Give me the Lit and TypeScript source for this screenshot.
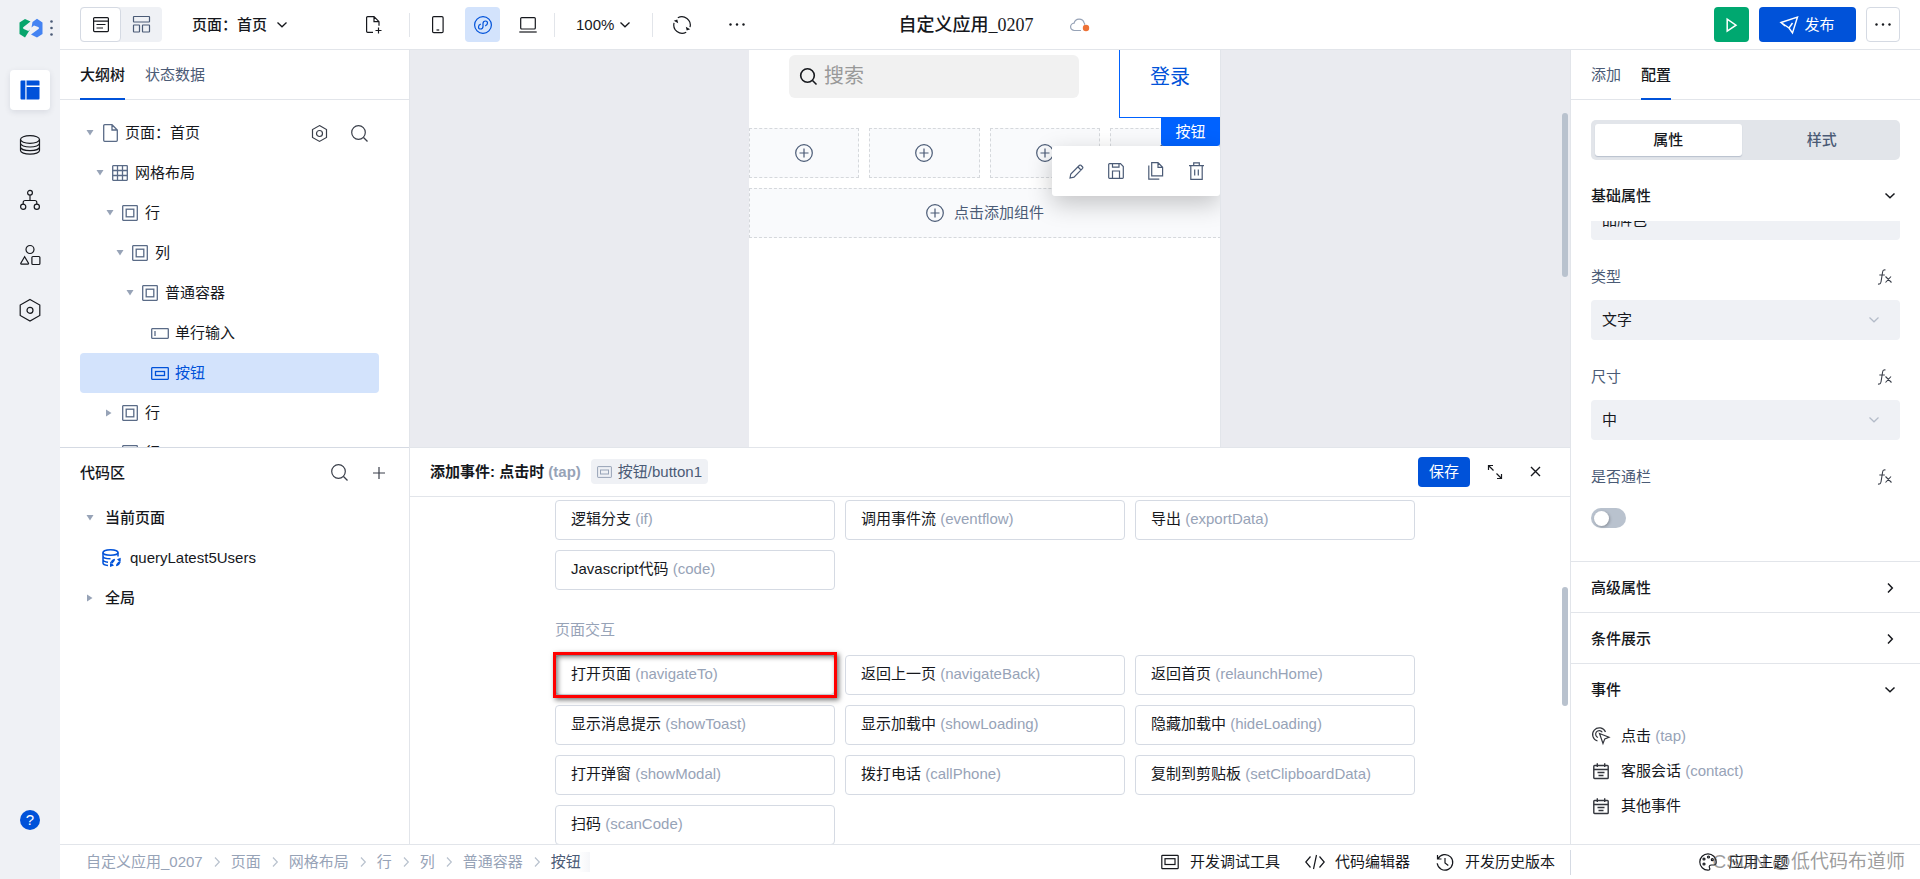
import { LitElement, html, svg, css, nothing } from "lit";
import type { TemplateResult } from "lit";
import { customElement, property } from "lit/decorators.js";
import { classMap } from "lit/directives/class-map.js";
import { styleMap } from "lit/directives/style-map.js";

/* ---------- icons ---------- */

const shapes: Record<string, TemplateResult> = {
  logo: svg`<path fill="#07a56c" stroke="none" d="M0.5 4.500 6 1l5.500 2.500-7 5.500q-1.500 1.200.3 2l4.500 2 1.700-1.500-5 8L.5 16z"/><path fill="#4483f2" stroke="none" d="M13.500 4 18 .8 23.500 4.500V16L18 19.500l-6-3 7.500-5.500q1.500-1-.3-2L15 7.500 12.500 9.500z"/>`,
  layout: svg`<path fill="currentColor" stroke="none" d="M1.500.5h3.500v19H1.500a1 1 0 0 1-1-1v-17a1 1 0 0 1 1-1zM6.500.5h12a1 1 0 0 1 1 1V5.500h-13zM6.500 7h13v11.500a1 1 0 0 1-1 1h-12z"/><path d="M5.700.5v19" stroke="#9dbdf2"/>`,
  database: svg`<ellipse cx="10" cy="4.500" rx="9.500" ry="3.800"/><path d="M.5 4.500v11c0 2.100 4.200 3.700 9.500 3.700s9.500-1.600 9.500-3.700v-11M.5 8.300C.5 10.400 4.700 12 10 12s9.500-1.600 9.500-3.700M.5 12c0 2.100 4.200 3.600 9.500 3.600s9.500-1.500 9.500-3.600"/>`,
  flow: svg`<circle cx="10" cy="2.800" r="2.400"/><circle cx="3.200" cy="16.800" r="2.600"/><circle cx="16.800" cy="16.800" r="2.600"/><path d="M10 5.200v5.300M3.200 14.200v-1.700q0-2 2-2h9.600q2 0 2 2v1.700"/>`,
  shapes: svg`<circle cx="10" cy="4.500" r="4"/><path d="M4.600 11.800.8 18.300q-.3.900.6.900h6.500q.9 0 .6-.9z"/><rect x="11.900" y="11.500" width="8" height="8" rx="1"/>`,
  hex: svg`<path d="M10-.5 19.800 5v10.500L10 21 .2 15.500V5z"/><circle cx="10" cy="10.300" r="3"/>`,
  gear: svg`<path d="M8.500.6 15.500 4.500v8L8.500 16.400 1.500 12.500v-8z"/><circle cx="8.500" cy="8.500" r="3"/>`,
  panel: svg`<rect x=".6" y=".6" width="14.800" height="14" rx="1"/><path d="M.6 4.200h14.800M3.500 7.500h9M3.500 11h6.500"/>`,
  blocks: svg`<rect x=".5" y=".5" width="16" height="5.500" rx=".5"/><rect x=".5" y="9" width="6" height="7" rx=".5"/><rect x="9.500" y="9" width="7" height="7" rx=".5"/>`,
  chevronDown: svg`<path d="m1.500 3.500 4.500 4.300 4.500-4.300"/>`,
  chevronRight: svg`<path d="m4 1.500 4.300 4.500L4 10.500"/>`,
  fileAdd: svg`<path d="M7 16.300H1.600a1 1 0 0 1-1-1V1.700a1 1 0 0 1 1-1H8l5 5v4M8 .7v5h5M12.500 11.500v6M9.500 14.500h6"/>`,
  phone: svg`<rect x=".6" y=".6" width="10.500" height="16" rx="1.200"/><path d="M4.500 14h2.700"/>`,
  mini: svg`<circle cx="9" cy="9" r="8.400"/><path d="M6.800 8.200C3.600 9 4 13 6.400 13 8.200 13 9 11.900 9 10.500v-3C9 6.100 9.800 5 11.600 5c2.400 0 2.800 4-.4 4.800"/>`,
  laptop: svg`<rect x="1.700" y=".6" width="14.600" height="11.400" rx="1"/><path d="M.3 15h17.400"/>`,
  refresh: svg`<path d="M4.800 1.800A8.400 8.400 0 0 1 17 11.200M13.200 16.200A8.400 8.400 0 0 1 1 6.800"/><path fill="currentColor" stroke="none" d="M.8 4.700 4.300 3.500l.9 3.800zM17.200 13.300l-3.500 1.200-.9-3.800z"/>`,
  dots: svg`<g fill="currentColor" stroke="none"><circle cx="1.500" cy="1.500" r="1.200"/><circle cx="8" cy="1.500" r="1.200"/><circle cx="14.500" cy="1.500" r="1.200"/></g>`,
  dotsV: svg`<g fill="currentColor" stroke="none"><circle cx="1.500" cy="1.500" r="1.300"/><circle cx="1.500" cy="8" r="1.300"/><circle cx="1.500" cy="14.500" r="1.300"/></g>`,
  cloud: svg`<path d="M11 13.500H4.500a3.700 3.700 0 0 1-.4-7.400 5.200 5.200 0 0 1 10-.3q1 1 .4 2"/><circle cx="16" cy="11" r="3.200" fill="#ed7135" stroke="none"/>`,
  play: svg`<path d="M1.200 1.200v12L10 7.200z"/>`,
  send: svg`<path d="M1 6.500 17.500 1l-5 16-3.500-5zM9 12l3.500-5M1 6.500l4 3.500"/>`,
  page: svg`<path d="M1.700.7H9l5.300 5.300v10.300a1 1 0 0 1-1 1H1.700a1 1 0 0 1-1-1V1.700a1 1 0 0 1 1-1zM9 .7V6h5.300"/>`,
  grid: svg`<rect x=".7" y=".7" width="14.600" height="14.600" rx=".5"/><path d="M5.500.7v14.600M10.500.7v14.600M.7 5.500h14.600M.7 10.500h14.600"/>`,
  box: svg`<rect x=".7" y=".7" width="14.600" height="14.600" rx=".5"/><rect x="4.200" y="4.200" width="7.600" height="7.600"/>`,
  input: svg`<rect x=".7" y=".7" width="16.600" height="9.600" rx=".5"/><path d="M4 3v5"/>`,
  button: svg`<rect x=".7" y=".7" width="16.600" height="11.600" rx=".5"/><rect x="4.500" y="4.500" width="9" height="4"/>`,
  search: svg`<circle cx="7.500" cy="7.500" r="6.800"/><path d="m12.500 12.500 4 4"/>`,
  plus: svg`<path d="M6 0v12M0 6h12"/>`,
  query: svg`<ellipse cx="8.500" cy="3.500" rx="7.500" ry="2.800"/><path d="M1 3.500v10.500c0 1.200 2 2.200 5 2.600M16 3.500v4M1 7c0 1.600 3 2.800 7.500 2.800M1 10.500c0 1.400 2 2.400 5 2.800"/><path fill="currentColor" stroke="none" d="M8.500 14.500q.3-4 4.500-4.700l-.3 2-2 2.400zM18.500 12.500q-.3 4-4.500 4.700l.3-2 2-2.400zM8 12.500v5.500l4-1.500zM18.700 14V8.700l-3.700 1.500z"/>`,
  plusCircle: svg`<circle cx="9" cy="9" r="8.300"/><path d="M9 4.500v9M4.500 9h9"/>`,
  pencil: svg`<path d="m1 14 .8-4L10.500 1.300q.7-.6 1.400 0l1.700 1.700q.6.700 0 1.400L5 13.200zM9 3l3 3"/>`,
  save: svg`<path d="M1.500.7h11l2.800 2.800v11a.8.8 0 0 1-.8.800h-13a.8.8 0 0 1-.8-.8v-13a.8.8 0 0 1 .8-.8zM4.500.7v3.500h6.500V.7M4.500 15.300V8h7v7.300"/>`,
  copy: svg`<path d="M3.700.7H10l4.600 4.600v8.600H3.700zM10 .7v4.600h4.600M.8 3.500v13.700h10.500"/>`,
  trash: svg`<path d="M0 3.700h15M1.800 3.700v13.600h11.400V3.700M4.700 3.700V.8h5.600v2.900M5.700 7.500v6M9.300 7.500v6"/>`,
  expand: svg`<path d="M1.500 6V1.500H6M1.500 1.500l5 5M14.500 10v4.500H10M14.500 14.500l-5-5"/>`,
  close: svg`<path d="m1 1 9 9M10 1l-9 9"/>`,
  tap: svg`<path d="M5.500 14a6.700 6.700 0 1 1 8-9M6 10.500a3.600 3.600 0 1 1 4.300-5.300M7.500 6.500 17 10.200l-4.200 1.700L11 16.500z"/>`,
  calendar: svg`<rect x=".8" y="2.500" width="14.400" height="13" rx=".8"/><path d="M.8 6.500h14.400M4.300.3V4M11.700.3V4M4.500 9.500h7M5.500 12.500h5"/>`,
  screen: svg`<rect x=".8" y="1.300" width="16.400" height="13.400" rx=".8"/><rect x="4" y="4.700" width="10" height="5.800"/>`,
  code: svg`<path d="M5.500 2.500.8 8l4.700 5.500M14.500 2.500 19.200 8l-4.700 5.500M11.500 1 8.500 15"/>`,
  history: svg`<path d="M1.500 2v4h4M2 5.800a7.800 7.800 0 1 1-.8 4.500M9 5v5l3.300 2.500"/>`,
  palette: svg`<path d="M9 .8a8.200 8.200 0 1 0 0 16.400c1.800 0 2.300-1 1.500-2.500-.8-1.600.2-2.700 2-2.700h2.500c1.500 0 2.200-1 2.200-3A8.200 8.200 0 0 0 9 .8z"/><circle cx="5" cy="6" r="1"/><circle cx="9.500" cy="4" r="1"/><circle cx="13.300" cy="6.700" r="1"/><circle cx="5" cy="11" r="1"/>`,
  fx: svg`<path d="M7.500 1q-2.400-.7-2.900 2L3 13q-.5 2.500-3 2M1.300 6h5.500M7.500 7.500l6 6M13 7.500l-5.500 6"/>`,
  arrowDown: svg`<path fill="currentColor" stroke="none" d="M.5 0h7L4 5.500z"/>`,
  arrowRight: svg`<path fill="currentColor" stroke="none" d="M0 .5v7L5.500 4z"/>`,
};

const icon = (name: string, w: number, h: number = w, stroke = 1.2) =>
  html`<svg
    width=${w}
    height=${h}
    viewBox="0 0 ${w} ${h}"
    fill="none"
    stroke="currentColor"
    stroke-width=${stroke}
    overflow="visible"
    aria-hidden="true"
  >${shapes[name]}</svg>`;

/* ---------- shared styles ---------- */

const base = css`
  * {
    box-sizing: border-box;
  }
  :host {
    font-family: "Liberation Sans", "Noto Sans CJK SC", sans-serif;
    font-size: 15px;
    line-height: 20px;
    color: #16181d;
  }
  button,
  input,
  select {
    font: inherit;
    color: inherit;
    margin: 0;
    padding: 0;
    border: 0;
    background: none;
    outline: none;
    appearance: none;
  }
  button {
    display: inline-flex;
    align-items: center;
    justify-content: center;
    white-space: nowrap;
  }
  a {
    color: inherit;
    text-decoration: none;
  }
  h2,
  h3 {
    margin: 0;
    font: inherit;
  }
  svg {
    display: block;
    flex: none;
  }
  .tabs {
    display: flex;
    gap: 20px;
    height: 50px;
    padding: 0 20px;
    border-bottom: 1px solid #e2e5ea;
    flex: none;
  }
  .tab {
    height: 50px;
    padding-bottom: 1px;
    color: #4b5b76;
    border-top: 2px solid transparent;
    border-bottom: 2px solid transparent;
  }
  .tab.on {
    color: #16181d;
    font-weight: 500;
    border-bottom-color: #0052d9;
  }
  .dim {
    color: #97a3b7;
  }
`;

/* ---------- side rail ---------- */

@customElement("side-rail")
class SideRail extends LitElement {
  static styles = [
    base,
    css`
      :host {
        display: flex;
        flex-direction: column;
        align-items: center;
        width: 60px;
        flex: none;
        background: #eff1f5;
        padding-bottom: 49px;
      }
      .brand {
        display: flex;
        align-items: center;
        gap: 7px;
        height: 55px;
        padding-left: 11px;
        color: #4b5b76;
      }
      nav {
        display: flex;
        flex-direction: column;
        gap: 15px;
        padding-top: 15px;
        flex: 1;
      }
      .item {
        width: 40px;
        height: 40px;
        border-radius: 4px;
      }
      .item.on {
        background: #fff;
        color: #0052d9;
        box-shadow: 0 2px 6px rgba(20, 30, 60, 0.1);
      }
      .help {
        width: 20px;
        height: 20px;
        border-radius: 50%;
        background: #0052d9;
        color: #fff;
      }
    `,
  ];
  render() {
    const items = ["layout", "database", "flow", "shapes", "hex"];
    return html`
      <div class="brand">${icon("logo", 24, 20)}${icon("dotsV", 3, 16)}</div>
      <nav>
        ${items.map(
          (n, i) => html`<button class=${classMap({ item: true, on: i === 0 })} aria-label=${n}>${icon(n, 20)}</button>`
        )}
      </nav>
      <button class="help">?</button>
    `;
  }
}

/* ---------- top bar ---------- */

@customElement("top-bar")
class TopBar extends LitElement {
  static styles = [
    base,
    css`
      :host {
        display: flex;
        align-items: center;
        height: 50px;
        flex: none;
        padding: 0 20px;
        border-bottom: 1px solid #e2e5ea;
        background: #fff;
      }
      .group {
        display: flex;
        align-items: center;
        flex: 1 1 0;
      }
      .right {
        justify-content: flex-end;
        gap: 10px;
      }
      .views {
        display: flex;
        background: #eff1f5;
        border-radius: 4px;
      }
      .view {
        width: 41px;
        height: 35px;
        color: #4b5b76;
      }
      .view.on {
        background: #fff;
        border: 1px solid #d5dae3;
        border-radius: 4px;
        color: #16181d;
      }
      .page {
        gap: 9px;
        margin-left: 30px;
        margin-right: 68px;
        font-weight: 500;
      }
      .tool {
        width: 35px;
        height: 35px;
        border-radius: 4px;
      }
      .tool.on {
        background: #d3e3fc;
        color: #0052d9;
      }
      .sep {
        width: 1px;
        height: 24px;
        background: #e2e5ea;
      }
      .devices {
        display: flex;
        gap: 10px;
        padding: 0 9px 0 10px;
      }
      .zoom {
        gap: 5px;
        padding: 0 21px;
      }
      .sep + .tool {
        margin-left: 11px;
      }
      .first {
        margin-right: 18px;
      }
      .more {
        margin-left: 20px;
      }
      .title {
        display: flex;
        align-items: center;
        gap: 36px;
        padding-left: 8px;
        font-family: "Liberation Serif", "Noto Sans CJK SC", serif;
        font-size: 18px;
        font-weight: 500;
      }
      .title svg {
        color: #97a3b7;
      }
      .play,
      .publish,
      .menu {
        height: 35px;
        border-radius: 4px;
      }
      .play {
        width: 35px;
        background: #00a870;
        color: #fff;
      }
      .publish {
        width: 97px;
        gap: 6px;
        background: #0052d9;
        color: #fff;
      }
      .menu {
        width: 34px;
        border: 1px solid #d5dae3;
      }
    `,
  ];
  render() {
    return html`
      <div class="group">
        <div class="views">
          <button class="view on" aria-label="页面视图">${icon("panel", 16, 15)}</button>
          <button class="view" aria-label="布局视图">${icon("blocks", 17)}</button>
        </div>
        <button class="page">页面：首页 ${icon("chevronDown", 12, 12, 1.3)}</button>
        <button class="tool first" aria-label="新建页面">${icon("fileAdd", 16, 17)}</button>
        <span class="sep"></span>
        <div class="devices">
          <button class="tool" aria-label="手机">${icon("phone", 12, 17)}</button>
          <button class="tool on" aria-label="小程序">${icon("mini", 18)}</button>
          <button class="tool" aria-label="电脑">${icon("laptop", 18, 16)}</button>
        </div>
        <span class="sep"></span>
        <button class="zoom">100% ${icon("chevronDown", 12, 12, 1.3)}</button>
        <span class="sep"></span>
        <button class="tool" aria-label="刷新">${icon("refresh", 18)}</button>
        <button class="tool more" aria-label="更多">${icon("dots", 16, 3)}</button>
      </div>
      <div class="title"><span>自定义应用_0207</span>${icon("cloud", 20, 16)}</div>
      <div class="group right">
        <button class="play" aria-label="预览">${icon("play", 11, 14, 1.5)}</button>
        <button class="publish">${icon("send", 18, 18, 1.4)}<span>发布</span></button>
        <button class="menu" aria-label="菜单">${icon("dots", 16, 3)}</button>
      </div>
    `;
  }
}

/* ---------- outline and code ---------- */

interface Node {
  level: number;
  icon: string;
  text: string;
  arrow?: "down" | "right";
  on?: boolean;
}

const iconSize: Record<string, [number, number]> = {
  page: [15, 18],
  grid: [16, 16],
  box: [16, 16],
  input: [18, 11],
  button: [18, 13],
};

@customElement("outline-panel")
class OutlinePanel extends LitElement {
  private nodes: Node[] = [
    { level: 0, icon: "page", text: "页面：首页", arrow: "down" },
    { level: 1, icon: "grid", text: "网格布局", arrow: "down" },
    { level: 2, icon: "box", text: "行", arrow: "down" },
    { level: 3, icon: "box", text: "列", arrow: "down" },
    { level: 4, icon: "box", text: "普通容器", arrow: "down" },
    { level: 5, icon: "input", text: "单行输入" },
    { level: 5, icon: "button", text: "按钮", on: true },
    { level: 2, icon: "box", text: "行", arrow: "right" },
    { level: 2, icon: "box", text: "行" },
  ];
  static styles = [
    base,
    css`
      :host {
        display: flex;
        flex-direction: column;
        width: 350px;
        flex: none;
        border-right: 1px solid #e2e5ea;
        background: #fff;
      }
      section {
        flex: 1 1 0;
        min-height: 0;
        overflow: hidden;
        display: flex;
        flex-direction: column;
      }
      .tree {
        flex: 1;
        min-height: 0;
        padding: 13px 30px 0 20px;
        overflow: hidden;
      }
      .node {
        display: flex;
        align-items: center;
        gap: 6px;
        height: 40px;
        padding-left: 5px;
        border-radius: 4px;
      }
      .node.on {
        background: #d3e3fc;
        color: #0052d9;
      }
      .arrow,
      .glyph {
        display: flex;
        justify-content: center;
        flex: none;
        color: #97a3b7;
      }
      .arrow {
        width: 10px;
      }
      .glyph {
        width: 18px;
        color: #5a6b87;
      }
      .node.on .glyph {
        color: inherit;
      }
      .tools {
        display: flex;
        margin-left: auto;
      }
      .tools button {
        width: 40px;
        height: 40px;
        color: #3a3f4a;
      }
      .code {
        border-top: 1px solid #d5dae3;
      }
      .files {
        padding: 5px 10px 0 20px;
      }
      .head {
        display: flex;
        align-items: center;
        height: 40px;
        margin-bottom: 5px;
        font-weight: 500;
      }
      .group {
        gap: 10px;
        font-weight: 500;
      }
      .item {
        gap: 10px;
        padding-left: 22px;
      }
      .item svg {
        color: #0052d9;
      }
    `,
  ];
  render() {
    return html`
      <section>
        <div class="tabs">
          <button class="tab on">大纲树</button>
          <button class="tab">状态数据</button>
        </div>
        <div class="tree">
          ${this.nodes.map(
            (n) => html`<div
              class=${classMap({ node: true, on: !!n.on })}
              style=${styleMap({ paddingLeft: `${5 + n.level * 10}px` })}
            >
              <span class="arrow"
                >${n.arrow === "down"
                  ? icon("arrowDown", 8, 6)
                  : n.arrow === "right"
                    ? icon("arrowRight", 8, 8)
                    : nothing}</span
              >
              <span class="glyph">${icon(n.icon, ...iconSize[n.icon], 1.3)}</span>
              <span>${n.text}</span>
              ${n.level === 0
                ? html`<span class="tools">
                    <button aria-label="设置">${icon("gear", 17)}</button>
                    <button aria-label="搜索">${icon("search", 17)}</button>
                  </span>`
                : nothing}
            </div>`
          )}
        </div>
      </section>
      <section class="code">
        <div class="files">
          <div class="head">
            <h2>代码区</h2>
            <span class="tools">
              <button aria-label="搜索代码">${icon("search", 17)}</button>
              <button aria-label="新建代码">${icon("plus", 12)}</button>
            </span>
          </div>
          <div class="node group"><span class="arrow">${icon("arrowDown", 8, 6)}</span>当前页面</div>
          <div class="node item">${icon("query", 18, 18, 1.5)}queryLatest5Users</div>
          <div class="node group"><span class="arrow">${icon("arrowRight", 6, 8)}</span>全局</div>
        </div>
      </section>
    `;
  }
}

/* ---------- canvas ---------- */

@customElement("design-canvas")
class DesignCanvas extends LitElement {
  static styles = [
    base,
    css`
      :host {
        display: flex;
        flex: 1 1 0;
        min-height: 0;
        overflow: hidden;
        background: #eaebf0;
      }
      .stage {
        flex: 1;
        display: flex;
        justify-content: center;
      }
      .phone {
        width: 472px;
        background: #fff;
        overflow: hidden;
        display: flex;
        flex-direction: column;
        gap: 10px;
        border-right: 1px solid #e2e5ea;
      }
      .top {
        display: flex;
        gap: 40px;
        padding-left: 40px;
        height: 68px;
        flex: none;
      }
      .search {
        flex: 1;
        min-width: 0;
        display: flex;
        align-items: center;
        gap: 7px;
        height: 43px;
        margin-top: 5px;
        padding: 0 11px;
        border-radius: 6px;
        background: #f1f1f1;
      }
      .search input {
        flex: 1;
        min-width: 0;
        height: 30px;
        font-size: 20px;
      }
      .search input::placeholder {
        color: #999;
      }
      .picked {
        position: relative;
        width: 101px;
        border: solid #0062ff;
        border-width: 0 0 1px 1px;
      }
      .login {
        width: 100%;
        height: 54px;
        font-size: 20px;
        color: #0052d9;
      }
      .overlay {
        position: absolute;
        z-index: 1;
        top: 100%;
        right: 0;
        display: flex;
        flex-direction: column;
        align-items: flex-end;
      }
      .tag {
        width: 59px;
        height: 29px;
        line-height: 29px;
        text-align: center;
        background: #0062ff;
        color: #fff;
        border-radius: 0 0 3px 3px;
      }
      .bar {
        display: flex;
        height: 50px;
        padding: 0 4px;
        background: #fff;
        border-radius: 3px;
        color: #4b5b76;
        box-shadow: 0 8px 24px rgba(0, 0, 0, 0.22);
      }
      .bar button {
        width: 40px;
      }
      .cells {
        display: grid;
        grid-template-columns: repeat(4, 1fr);
        gap: 10px;
      }
      .slot {
        height: 50px;
        gap: 10px;
        border: 1px dashed #d5d8dc;
        background: #f9fafc;
        color: #4b5b76;
      }
      .slot.wide {
        margin-right: -1px;
      }
      .track {
        width: 10px;
        padding-top: 63px;
      }
      .thumb {
        width: 6px;
        height: 164px;
        margin-left: 2px;
        border-radius: 3px;
        background: #b9c2ce;
      }
    `,
  ];
  render() {
    return html`
      <div class="stage">
        <div class="phone">
          <div class="top">
            <label class="search">${icon("search", 17, 17, 1.6)}<input placeholder="搜索" aria-label="搜索" /></label>
            <div class="picked">
              <button class="login">登录</button>
              <div class="overlay">
                <span class="tag">按钮</span>
                <div class="bar">
                  <button aria-label="编辑">${icon("pencil", 15)}</button>
                  <button aria-label="保存">${icon("save", 16)}</button>
                  <button aria-label="复制">${icon("copy", 16, 18)}</button>
                  <button aria-label="删除">${icon("trash", 15, 18)}</button>
                </div>
              </div>
            </div>
          </div>
          <div class="cells">
            ${[1, 2, 3, 4].map(
              (i) => html`<button class="slot" aria-label="添加组件 ${i}">${icon("plusCircle", 18)}</button>`
            )}
          </div>
          <button class="slot wide">${icon("plusCircle", 18)}<span>点击添加组件</span></button>
        </div>
      </div>
      <div class="track"><div class="thumb"></div></div>
    `;
  }
}

/* ---------- event panel ---------- */

type Action = [string, string];

@customElement("event-panel")
class EventPanel extends LitElement {
  private logic: Action[] = [
    ["逻辑分支", "if"],
    ["调用事件流", "eventflow"],
    ["导出", "exportData"],
    ["Javascript代码", "code"],
  ];
  private pages: Action[] = [
    ["打开页面", "navigateTo"],
    ["返回上一页", "navigateBack"],
    ["返回首页", "relaunchHome"],
    ["显示消息提示", "showToast"],
    ["显示加载中", "showLoading"],
    ["隐藏加载中", "hideLoading"],
    ["打开弹窗", "showModal"],
    ["拨打电话", "callPhone"],
    ["复制到剪贴板", "setClipboardData"],
    ["扫码", "scanCode"],
  ];
  static styles = [
    base,
    css`
      :host {
        display: flex;
        flex-direction: column;
        flex: 1 1 0;
        min-height: 0;
        border-top: 1px solid #e2e5ea;
        background: #fff;
      }
      header {
        display: flex;
        align-items: center;
        height: 49px;
        flex: none;
        padding: 0 15px 0 20px;
        border-bottom: 1px solid #e2e5ea;
      }
      h2 {
        font-weight: bold;
      }
      .ref {
        display: flex;
        align-items: center;
        gap: 6px;
        height: 25px;
        margin: 0 auto 0 10px;
        padding: 0 6px;
        border-radius: 4px;
        background: #eff1f5;
        color: #4b5b76;
      }
      .ref svg {
        color: #97a3b7;
      }
      .save {
        width: 52px;
        height: 30px;
        margin-right: 5px;
        border-radius: 4px;
        background: #0052d9;
        color: #fff;
      }
      .act {
        width: 40px;
        height: 40px;
      }
      .scroll {
        flex: 1;
        min-height: 0;
        display: flex;
        overflow: hidden;
      }
      .content {
        flex: 1;
        padding: 3px 20px 0;
      }
      .list {
        width: 100%;
        max-width: 860px;
        margin: 0 auto;
      }
      .grid {
        display: grid;
        grid-template-columns: repeat(3, 1fr);
        gap: 10px;
      }
      h3 {
        margin: 30px 0 15px;
        color: #97a3b7;
      }
      .card {
        position: relative;
        height: 40px;
        justify-content: flex-start;
        padding: 0 15px 2px;
        border: 1px solid #d5dae3;
        border-radius: 4px;
      }
      .card .dim {
        white-space: pre;
      }
      .mark::after {
        content: "";
        position: absolute;
        inset: -4px -3px -4px -3px;
        border: 3px solid #f00;
        box-shadow:
          2px 2px 5px rgba(0, 0, 0, 0.55),
          inset 2px 2px 5px rgba(0, 0, 0, 0.5);
      }
      .track {
        width: 10px;
        padding-top: 90px;
      }
      .thumb {
        width: 6px;
        height: 119px;
        margin-left: 2px;
        border-radius: 3px;
        background: #b9c2ce;
      }
    `,
  ];
  private cards(list: Action[]) {
    return html`<div class="grid">
      ${list.map(
        ([name, id]) =>
          html`<button class=${classMap({ card: true, mark: id === "navigateTo" })}>
            ${name}<span class="dim"> (${id})</span>
          </button>`
      )}
    </div>`;
  }
  render() {
    return html`
      <header>
        <h2>添加事件: 点击时 <span class="dim">(tap)</span></h2>
        <span class="ref">
          <svg width="15" height="12" viewBox="0 0 15 12" fill="none" stroke="currentColor" aria-hidden="true">
            <rect x=".6" y=".6" width="13.800" height="10.800" rx=".5" />
            <rect x="3.500" y="4" width="8" height="4" />
          </svg>
          按钮/button1
        </span>
        <button class="save">保存</button>
        <button class="act" aria-label="展开">${icon("expand", 16)}</button>
        <button class="act" aria-label="关闭">${icon("close", 11, 11, 1.4)}</button>
      </header>
      <div class="scroll">
        <div class="content">
          <div class="list">
            ${this.cards(this.logic)}
            <h3>页面交互</h3>
            ${this.cards(this.pages)}
          </div>
        </div>
        <div class="track"><div class="thumb"></div></div>
      </div>
    `;
  }
}

/* ---------- config panel ---------- */

@customElement("config-field")
class ConfigField extends LitElement {
  @property() label = "";
  @property() value = "";
  @property({ type: Boolean }) toggle = false;
  static styles = [
    base,
    css`
      :host {
        display: block;
      }
      .row {
        display: flex;
        align-items: center;
        justify-content: space-between;
        height: 20px;
        padding-right: 8px;
        color: #4b5b76;
      }
      .row svg {
        color: #3a3f4a;
      }
      .box {
        display: grid;
        align-items: center;
        margin-top: 13px;
        border-radius: 4px;
        background: #eff1f5;
        color: #b4bcc9;
      }
      .box > * {
        grid-area: 1 / 1;
      }
      .box svg {
        justify-self: end;
        margin-right: 20px;
      }
      select {
        width: 100%;
        height: 40px;
        padding: 0 11px;
        color: #16181d;
      }
      input {
        display: flex;
        align-items: center;
        width: 35px;
        height: 20px;
        margin-top: 21px;
        padding: 0 3px;
        border-radius: 10px;
        background: #b9c2ce;
      }
      input::before {
        content: "";
        width: 15px;
        height: 15px;
        border-radius: 50%;
        background: #fff;
        box-shadow: 1px 1px 3px rgba(0, 0, 0, 0.25);
      }
    `,
  ];
  render() {
    return html`
      <div class="row"><label for="field">${this.label}</label>${icon("fx", 14, 16, 1.1)}</div>
      ${this.toggle
        ? html`<input id="field" type="checkbox" role="switch" />`
        : html`<div class="box">
            <select id="field">
              <option>${this.value}</option>
            </select>
            ${icon("chevronDown", 12, 12)}
          </div>`}
    `;
  }
}

@customElement("config-panel")
class ConfigPanel extends LitElement {
  static styles = [
    base,
    css`
      :host {
        display: flex;
        flex-direction: column;
        width: 350px;
        flex: none;
        overflow: hidden;
        border-left: 1px solid #e2e5ea;
        background: #fff;
      }
      .switch {
        display: flex;
        margin: 20px 20px 11px;
        padding: 4px;
        border-radius: 5px;
        background: #e2e5ea;
        flex: none;
      }
      .switch button {
        flex: 1;
        height: 32px;
        padding-left: 6px;
        color: #4b5b76;
        font-weight: 500;
      }
      .switch .on {
        flex: none;
        width: calc(50% - 4px);
        padding: 0;
        background: #fff;
        border-radius: 3px;
        color: #16181d;
        box-shadow: 0 1px 1px rgba(60, 80, 120, 0.25);
      }
      .section {
        display: flex;
        width: 100%;
        align-items: center;
        justify-content: space-between;
        height: 51px;
        flex: none;
        padding: 2px 24px 0 20px;
        border-top: 1px solid #e2e5ea;
        font-weight: 500;
      }
      .section.first {
        height: 50px;
        padding-top: 0;
        border-top: 0;
      }
      .fields {
        display: flex;
        flex-direction: column;
        gap: 27px;
        padding: 0 20px 33px;
      }
      .cut {
        display: flex;
        align-items: flex-end;
        height: 19px;
        overflow: hidden;
      }
      .cut select {
        flex: 1;
        height: 40px;
        padding: 0 11px;
        border-radius: 4px;
        background: #eff1f5;
      }
      ul {
        list-style: none;
        margin: 0;
        padding: 4px 20px;
      }
      li {
        display: flex;
        align-items: center;
        height: 35px;
      }
      .glyph {
        display: flex;
        justify-content: center;
        width: 20px;
        margin-right: 10px;
        color: #33363d;
      }
      li .dim {
        white-space: pre;
      }
    `,
  ];
  render() {
    return html`
      <div class="tabs">
        <button class="tab">添加</button>
        <button class="tab on">配置</button>
      </div>
      <div class="switch"><button class="on">属性</button><button>样式</button></div>
      <button class="section first">基础属性${icon("chevronDown", 12, 12, 1.5)}</button>
      <div class="fields">
        <div class="cut">
          <select aria-label="颜色">
            <option>品牌色</option>
          </select>
        </div>
        <config-field label="类型" value="文字"></config-field>
        <config-field label="尺寸" value="中"></config-field>
        <config-field label="是否通栏" toggle></config-field>
      </div>
      <button class="section">高级属性${icon("chevronRight", 12, 12, 1.5)}</button>
      <button class="section">条件展示${icon("chevronRight", 12, 12, 1.5)}</button>
      <button class="section">事件${icon("chevronDown", 12, 12, 1.5)}</button>
      <ul>
        <li><span class="glyph">${icon("tap", 18)}</span>点击<span class="dim"> (tap)</span></li>
        <li><span class="glyph">${icon("calendar", 16, 16, 1.4)}</span>客服会话<span class="dim"> (contact)</span></li>
        <li><span class="glyph">${icon("calendar", 16, 16, 1.4)}</span>其他事件</li>
      </ul>
    `;
  }
}

/* ---------- footer ---------- */

@customElement("status-bar")
class StatusBar extends LitElement {
  static styles = [
    base,
    css`
      :host {
        display: flex;
        align-items: center;
        height: 35px;
        flex: none;
        border-top: 1px solid #e2e5ea;
        background: #fff;
      }
      nav {
        display: flex;
        align-items: center;
        flex: 1;
        padding-left: 26px;
        color: #97a3b7;
      }
      nav svg {
        margin: 0 8px;
        color: #b9c2ce;
      }
      .here {
        padding-right: 9px;
        color: #4b5b76;
        background: linear-gradient(to left, #f5f6f9, #fff 12px);
      }
      .tools {
        display: flex;
        gap: 25px;
        padding-right: 15px;
      }
      .tools button,
      .theme button {
        gap: 10px;
      }
      .glyph {
        display: flex;
        justify-content: center;
        width: 20px;
      }
      .theme {
        position: relative;
        display: flex;
        align-items: center;
        justify-content: center;
        width: 350px;
        height: 25px;
        padding-right: 4px;
        border-left: 1px solid #d5dae3;
      }
      .mark {
        position: absolute;
        right: 15px;
        top: 2px;
        font-size: 19px;
        color: rgba(90, 90, 90, 0.6);
        white-space: nowrap;
      }
    `,
  ];
  render() {
    const path = ["自定义应用_0207", "页面", "网格布局", "行", "列", "普通容器"];
    return html`
      <nav>
        ${path.map((p) => html`<a href="#">${p}</a>${icon("chevronRight", 12)}`)}
        <a class="here" href="#">按钮</a>
      </nav>
      <div class="tools">
        <button><span class="glyph">${icon("screen", 18, 16)}</span>开发调试工具</button>
        <button><span class="glyph">${icon("code", 20, 16)}</span>代码编辑器</button>
        <button><span class="glyph">${icon("history", 18)}</span>开发历史版本</button>
      </div>
      <div class="theme">
        <button><span class="glyph">${icon("palette", 18)}</span>应用主题</button>
        <span class="mark">CSDN @低代码布道师</span>
      </div>
    `;
  }
}

/* ---------- root ---------- */

@customElement("app-root")
class AppRoot extends LitElement {
  static styles = [
    base,
    css`
      :host {
        display: flex;
        height: 100vh;
        background: #fff;
      }
      .main,
      .center {
        display: flex;
        flex-direction: column;
        flex: 1;
        min-width: 0;
      }
      .body {
        display: flex;
        flex: 1;
        min-height: 0;
      }
    `,
  ];
  render() {
    return html`
      <side-rail></side-rail>
      <div class="main">
        <top-bar></top-bar>
        <div class="body">
          <outline-panel></outline-panel>
          <div class="center">
            <design-canvas></design-canvas>
            <event-panel></event-panel>
          </div>
          <config-panel></config-panel>
        </div>
        <status-bar></status-bar>
      </div>
    `;
  }
}
